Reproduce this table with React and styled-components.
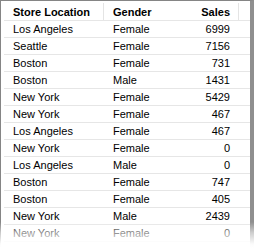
import styled, { createGlobalStyle } from "styled-components";

const Global = createGlobalStyle`
  html, body {
    margin: 0;
    background: #fff;
  }
`;

const Shot = styled.div`
  position: relative;
  width: 254px;
  height: 248px;
  overflow: hidden;
`;

const Frame = styled.div`
  box-sizing: border-box;
  width: 254px;
  height: 260px;
  border-left: 1px solid #858585;
  border-top: 1px solid #858585;
  border-right: 4px solid #8f8f8f;
  padding-left: 3px;
  font-family: "Liberation Sans", Arial, sans-serif;
  font-size: 11px;
  color: #000;
`;

const Fade = styled.div`
  position: absolute;
  left: 0;
  right: 0;
  bottom: 0;
  height: 26px;
  background: linear-gradient(to bottom, rgba(255,255,255,0) 0%, rgba(255,255,255,0.55) 40%, rgba(255,255,255,0.97) 85%, #fff 100%);
  pointer-events: none;
`;

const Row = styled.div`
  display: grid;
  grid-template-columns: 100px 80px 55px 1fr;
  border-bottom: 1px solid #e6e6e6;
  height: ${(p) => (p.$head ? 19 : 16)}px;
  font-weight: ${(p) => (p.$head ? "bold" : "normal")};
`;

const Cell = styled.div`
  position: relative;
  padding: ${(p) => (p.$head ? "4px 9px 0" : "0 9px")};
  line-height: ${(p) => (p.$head ? 15 : 16)}px;
  text-align: ${(p) => (p.$right ? "right" : "left")};
  white-space: nowrap;
  overflow: hidden;

  &::after {
    content: "";
    display: ${(p) => (p.$sep ? "block" : "none")};
    position: absolute;
    right: 0;
    top: 2px;
    bottom: 0;
    width: 1px;
    background: #e4e4e4;
  }
`;

const rows = [
  ["Los Angeles", "Female", 6999],
  ["Seattle", "Female", 7156],
  ["Boston", "Female", 731],
  ["Boston", "Male", 1431],
  ["New York", "Female", 5429],
  ["New York", "Female", 467],
  ["Los Angeles", "Female", 467],
  ["New York", "Female", 0],
  ["Los Angeles", "Male", 0],
  ["Boston", "Female", 747],
  ["Boston", "Female", 405],
  ["New York", "Male", 2439],
  ["New York", "Female", 0],
];

export default function App() {
  return (
    <>
      <Global />
      <Shot>
        <Frame>
          <Row $head>
            <Cell $head $sep>Store Location</Cell>
            <Cell $head>Gender</Cell>
            <Cell $head $right $sep>Sales</Cell>
            <Cell $head />
          </Row>
          {rows.map(([loc, gender, sales], i) => (
            <Row key={i}>
              <Cell>{loc}</Cell>
              <Cell>{gender}</Cell>
              <Cell $right>{sales}</Cell>
              <Cell />
            </Row>
          ))}
        </Frame>
        <Fade />
      </Shot>
    </>
  );
}
